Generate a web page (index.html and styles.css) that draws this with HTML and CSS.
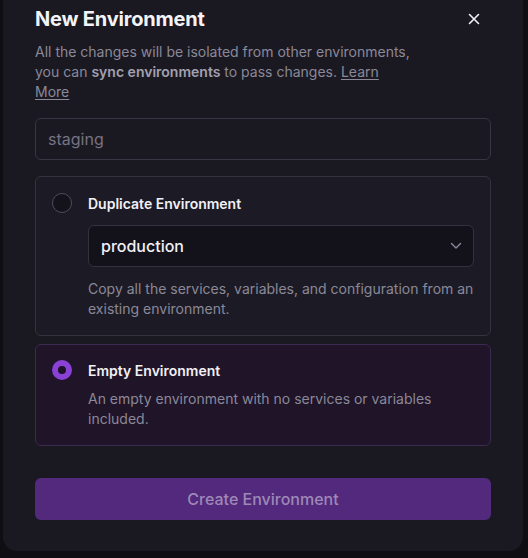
FILE: index.html
```html
<!DOCTYPE html>
<html lang="en">
<head>
<meta charset="utf-8">
<title>New Environment</title>
<link rel="stylesheet" href="styles.css">
</head>
<body>
<div class="modal">
  <div class="header">
    <h1 class="title">New Environment</h1>
    <button class="close" aria-label="Close">
      <svg width="12" height="12" viewBox="0 0 12 12"><path d="M1.5 1.5 L10.5 10.5 M10.5 1.5 L1.5 10.5" stroke="#f2f1f6" stroke-width="1.6" stroke-linecap="round"/></svg>
    </button>
  </div>
  <p class="desc">All the changes will be isolated from other environments, you can <strong>sync environments</strong> to pass changes. <a href="#">Learn More</a></p>
  <input class="name" type="text" placeholder="staging">
  <div class="options">
    <div class="card">
      <div class="card-head">
        <span class="radio"></span>
        <span class="card-title">Duplicate Environment</span>
      </div>
      <div class="card-body">
        <div class="select">
          <span>production</span>
          <svg width="12" height="8" viewBox="0 0 12 8"><path d="M1.5 1.5 L6 6 L10.5 1.5" fill="none" stroke="#8e8b9c" stroke-width="1.4" stroke-linecap="round" stroke-linejoin="round"/></svg>
        </div>
        <p class="card-desc">Copy all the services, variables, and configuration from an existing environment.</p>
      </div>
    </div>
    <div class="card selected">
      <div class="card-head">
        <span class="radio checked"></span>
        <span class="card-title">Empty Environment</span>
      </div>
      <div class="card-body">
        <p class="card-desc tight">An empty environment with no services or variables included.</p>
      </div>
    </div>
  </div>
  <button class="create">Create Environment</button>
</div>
</body>
</html>
```
FILE: styles.css
```css
html, body {
  margin: 0;
  padding: 0;
  background: #0f0e13;
  font-family: Inter, "Liberation Sans", sans-serif;
}

.modal {
  box-sizing: border-box;
  width: 520px;
  margin-left: 3px;
  padding: 5px 32px 31px;
  background: #1a1922;
  border-radius: 0 0 14px 14px;
}

.header {
  display: flex;
  align-items: center;
  justify-content: space-between;
}

.title {
  margin: 0;
  font-size: 20px;
  line-height: 28px;
  font-weight: 700;
  color: #f4f3f8;
  letter-spacing: -0.2px;
}

.close {
  display: flex;
  align-items: center;
  justify-content: center;
  width: 24px;
  height: 24px;
  margin-right: 5px;
  padding: 0;
  border: 0;
  background: none;
}

.desc {
  margin: 9px 0 0;
  max-width: 380px;
  font-size: 14px;
  line-height: 20px;
  color: #8b8898;
}

.desc strong {
  font-weight: 600;
  color: #a3a0b0;
}

.desc a {
  color: #8b8898;
  text-decoration: underline;
  text-underline-offset: 2px;
}

.name {
  display: block;
  box-sizing: border-box;
  width: 100%;
  height: 42px;
  margin-top: 16px;
  padding: 0 12px;
  background: #1a1922;
  border: 1px solid #373543;
  border-radius: 6px;
  font-family: inherit;
  font-size: 16px;
  color: #e8e6ef;
  outline: none;
}

.name::placeholder {
  color: #767383;
}

.options {
  display: flex;
  flex-direction: column;
  gap: 8px;
  margin-top: 16px;
}

.card {
  padding: 15px 16px 16px;
  border: 1px solid #34323f;
  border-radius: 6px;
  background: #1c1b25;
}

.card.selected {
  padding-top: 14px;
  background: #1f1428;
  border-color: #3b2a51;
}

.card-head {
  display: flex;
  align-items: center;
  gap: 16px;
  height: 22px;
}

.radio {
  box-sizing: border-box;
  flex: none;
  width: 20px;
  height: 20px;
  border-radius: 50%;
  border: 1.5px solid #4f4c5b;
  background: #14131b;
}

.radio.checked {
  border: 6px solid #8a41d6;
  background: #1d1226;
}

.card-title {
  font-size: 14px;
  font-weight: 600;
  color: #f1f0f5;
}

.card-body {
  padding-left: 36px;
}

.select {
  display: flex;
  align-items: center;
  justify-content: space-between;
  box-sizing: border-box;
  height: 42px;
  margin-top: 11px;
  padding: 0 11px 0 12px;
  background: #13121a;
  border: 1px solid #34323f;
  border-radius: 6px;
  font-size: 16px;
  font-weight: 500;
  color: #f1f0f5;
}

.card-desc {
  margin: 12px 0 0;
  font-size: 14px;
  line-height: 20px;
  color: #8b8898;
}

.card-desc.tight {
  margin-top: 8px;
}

.create {
  display: block;
  width: 100%;
  height: 42px;
  margin-top: 32px;
  border: 0;
  border-radius: 6px;
  background: #52297c;
  font-family: inherit;
  font-size: 16px;
  font-weight: 500;
  color: #9e88b7;
}
```
